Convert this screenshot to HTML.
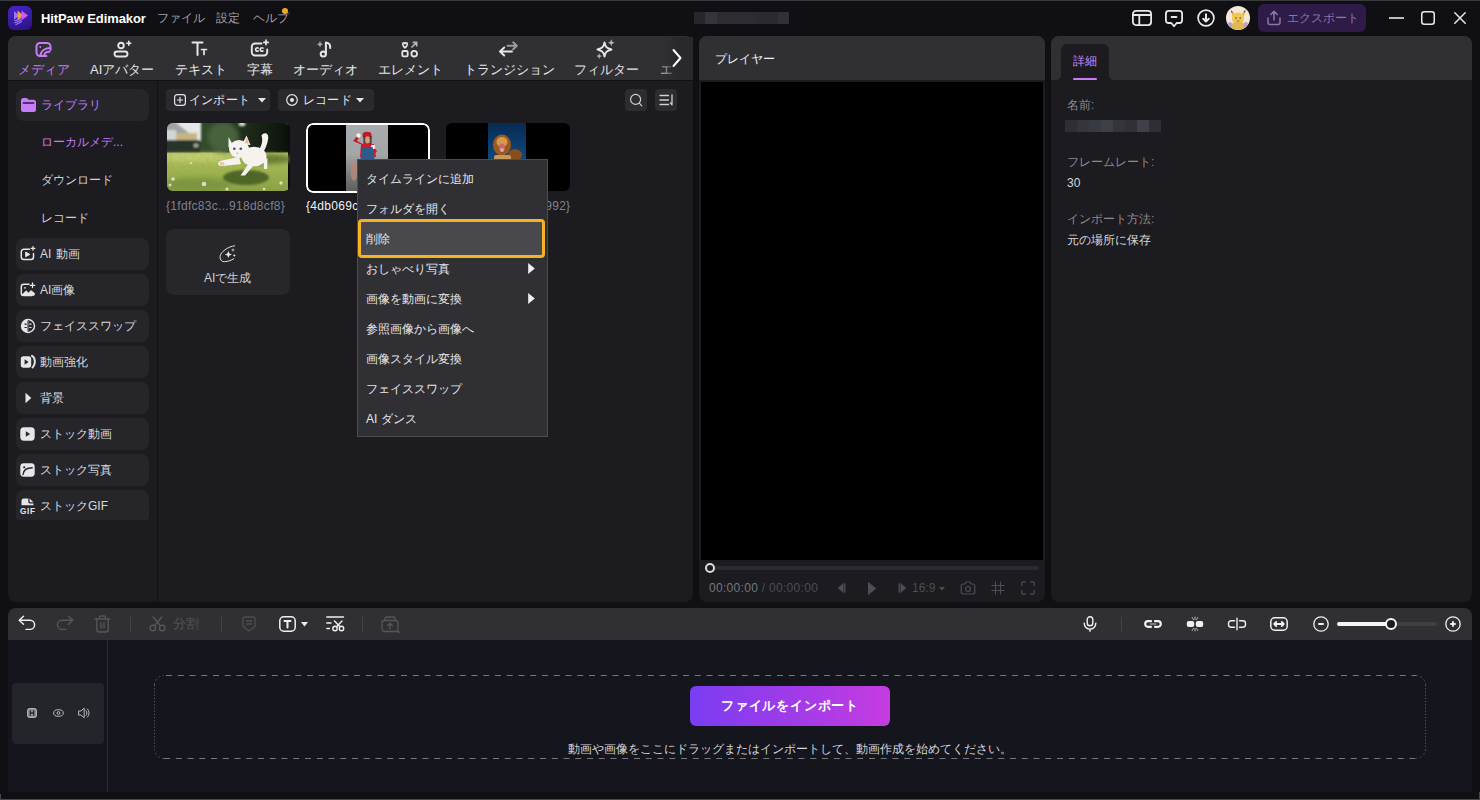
<!DOCTYPE html>
<html lang="ja"><head><meta charset="utf-8"><title>HitPaw Edimakor</title>
<style>
*{box-sizing:border-box;margin:0;padding:0}
html,body{width:1480px;height:800px;overflow:hidden;background:#0f0f14}
body{font-family:"Liberation Sans",sans-serif;font-size:13px;color:#d4d4d8;position:relative}
.a{position:absolute}
.t{position:absolute;white-space:nowrap;line-height:1}
svg{position:absolute;overflow:visible}
.panel{position:absolute;background:#1b1b20;border-radius:8px;overflow:hidden}
.hdr{position:absolute;left:0;top:0;right:0;height:44px;background:#303033}
.sb{position:absolute;left:16px;width:133px;height:32px;border-radius:8px;background:#25252a}
.sb .t{left:24px;top:10px;font-size:12px;color:#dadade}
.tab{position:absolute;top:31px;font-size:13px;color:#e4e4e8;line-height:1;white-space:nowrap}
.mi{position:absolute;left:8px;margin-top:1px;font-size:12px;color:#e6e6ea;line-height:1;white-space:nowrap}
</style></head><body>

<!-- ===== title bar ===== -->
<div class="a" style="left:0;top:0;width:1480px;height:1px;background:#3a3a3e"></div>
<div class="a" id="logo" style="left:8px;top:6px;width:24px;height:24px;border-radius:6px;background:linear-gradient(160deg,#4a25c8,#2a1280)"></div>
<div class="t" style="left:41px;top:12px;font-size:13px;font-weight:bold;letter-spacing:-.1px;color:#fff">HitPaw Edimakor</div>
<div class="t" style="left:157px;top:12px;font-size:12px;color:#a2a2aa">ファイル</div>
<div class="t" style="left:216px;top:12px;font-size:12px;color:#a2a2aa">設定</div>
<div class="t" style="left:253px;top:12px;font-size:12px;color:#a2a2aa">ヘルプ</div>
<div class="a" style="left:282px;top:8px;width:6px;height:6px;border-radius:50%;background:#f5a623"></div>
<div class="a" id="blur1" style="left:694px;top:12px;width:95px;height:12px;background:linear-gradient(90deg,#26262b 0 12%,#34343a 12% 24%,#2c2c31 24% 50%,#2a2d33 50% 64%,#2a2a2f 64% 88%,#303036 88%)"></div>


<!-- logo glyph -->
<svg style="left:8px;top:6px" width="24" height="24" viewBox="0 0 24 24">
 <path d="M6 5L11 9.500L6 14Z" fill="#8f7bff"/>
 <path d="M9.500 4.500L15.500 9.500L9.500 14.500Z" fill="#ff9b3d"/>
 <path d="M13.500 4.500L20 9.500L13.500 14.500Z" fill="#c95cf5"/>
 <path d="M13 12.500L6.500 15M13.500 14L6.500 17M14 15.500L7.500 18.800" stroke="#9a7bff" stroke-width="1.100" fill="none"/>
</svg>
<!-- right title icons -->
<svg style="left:1132px;top:10px" width="20" height="16" viewBox="0 0 20 16" fill="none" stroke="#e8e8ec" stroke-width="1.800">
 <rect x=".9" y=".9" width="18.200" height="14.200" rx="3"/><path d="M.9 5H19.100M7.300 5V15.100"/></svg>
<svg style="left:1165px;top:10px" width="18" height="18" viewBox="0 0 18 18" fill="none" stroke="#e8e8ec" stroke-width="1.800" stroke-linejoin="round">
 <path d="M3.700 .9H14.300A2.800 2.800 0 0 1 17.100 3.700V10.200A2.800 2.800 0 0 1 14.300 13H11.700L9 16.300L6.300 13H3.700A2.800 2.800 0 0 1 .9 10.200V3.700A2.800 2.800 0 0 1 3.700 .9Z"/><path d="M6.600 7H11.400" stroke-linecap="round" stroke-width="2"/></svg>
<svg style="left:1197px;top:9px" width="18" height="18" viewBox="0 0 18 18" fill="none" stroke="#e8e8ec" stroke-width="1.700" stroke-linecap="round" stroke-linejoin="round">
 <circle cx="9" cy="9" r="7.900"/><path d="M9 5.300V12M6.200 9.700L9 12.500L11.800 9.700" stroke-width="2"/></svg>
<svg style="left:1226px;top:6px" width="24" height="24" viewBox="0 0 24 24"><defs><clipPath id="av"><circle cx="12" cy="12" r="12"/></clipPath><filter id="avb"><feGaussianBlur stdDeviation=".6"/></filter></defs>
 <g clip-path="url(#av)"><rect width="24" height="24" fill="#f4e8dc"/>
 <g filter="url(#avb)">
  <path d="M5 4L10 9L6.500 11Z" fill="#e8c04a"/><path d="M19.500 3.500L14.500 9L18 11Z" fill="#e8c04a"/>
  <path d="M5 4L7 6.500L5.500 7Z" fill="#5a4630"/><path d="M19.500 3.500L17.500 6L19 6.800Z" fill="#5a4630"/>
  <ellipse cx="12" cy="13" rx="6" ry="6.500" fill="#efc94e"/>
  <ellipse cx="12" cy="20" rx="7.500" ry="4" fill="#e2b652"/>
  <path d="M2 17C4 15 6 16 6.500 19L4 23Z" fill="#b7a0cc"/><path d="M22 17C20 15 18 16 17.500 19L20 23Z" fill="#b7a0cc"/>
  <circle cx="10" cy="12" r=".8" fill="#5a4630"/><circle cx="14.200" cy="12" r=".8" fill="#5a4630"/>
  <ellipse cx="12" cy="15" rx="1.500" ry="1" fill="#c88a5a"/>
 </g></g></svg>
<div class="a" style="left:1258px;top:4px;width:108px;height:28px;border-radius:6px;background:#2e1b48"></div>
<svg style="left:1267px;top:10px" width="14" height="16" viewBox="0 0 14 16" fill="none" stroke="#8a78a6" stroke-width="1.5" stroke-linecap="round" stroke-linejoin="round">
 <path d="M7 10V1.5M3.8 4.5L7 1.2L10.2 4.5M1 8V12.5A2 2 0 0 0 3 14.5H11A2 2 0 0 0 13 12.5V8"/></svg>
<div class="t" style="left:1287px;top:12px;font-size:12px;color:#8a78a6">エクスポート</div>
<svg style="left:1389px;top:17px" width="15" height="2" viewBox="0 0 15 2"><path d="M0 1H15" stroke="#e8e8ec" stroke-width="1.6"/></svg>
<svg style="left:1421px;top:11px" width="14" height="14" viewBox="0 0 14 14" fill="none" stroke="#e8e8ec" stroke-width="1.5"><rect x=".75" y=".75" width="12.5" height="12.5" rx="2.5"/></svg>
<svg style="left:1454px;top:12px" width="12" height="12" viewBox="0 0 12 12" fill="none" stroke="#e8e8ec" stroke-width="1.5" stroke-linecap="round"><path d="M.8 .8L11.2 11.2M11.2 .8L.8 11.2"/></svg>

<!-- ===== left panel ===== -->
<div class="panel" id="left" style="left:8px;top:36px;width:685px;height:566px">
  <div class="hdr"></div>
</div>


<!-- ===== tabs ===== -->
<div class="t" style="left:18px;top:63px;font-size:13px;color:#c77dfa">メディア</div>
<div class="t" style="left:90px;top:63px;font-size:13px;color:#e6e6ea">AIアバター</div>
<div class="t" style="left:175px;top:63px;font-size:13px;color:#e6e6ea">テキスト</div>
<div class="t" style="left:247px;top:63px;font-size:13px;color:#e6e6ea">字幕</div>
<div class="t" style="left:293px;top:63px;font-size:13px;color:#e6e6ea">オーディオ</div>
<div class="t" style="left:378px;top:63px;font-size:13px;color:#e6e6ea">エレメント</div>
<div class="t" style="left:464px;top:63px;font-size:13px;color:#e6e6ea">トランジション</div>
<div class="t" style="left:574px;top:63px;font-size:13px;color:#e6e6ea">フィルター</div>
<div class="t" style="left:660px;top:63px;font-size:13px;color:#b4b4b8">エ</div>
<div class="a" style="left:664px;top:37px;width:29px;height:43px;background:linear-gradient(90deg,rgba(44,44,48,0),#29292d 50%)"></div>
<!-- media icon -->
<svg style="left:35px;top:41px" width="17" height="17" viewBox="0 0 17 17" fill="none" stroke="#c77dfa" stroke-width="2" stroke-linecap="round" stroke-linejoin="round">
 <path d="M11.5 15H5A3.5 3.5 0 0 1 1.5 11.5V5.5A3.5 3.5 0 0 1 5 2H12A3.5 3.5 0 0 1 15.5 5.5V9"/>
 <circle cx="5.3" cy="6" r=".9" fill="#c77dfa" stroke="none"/>
 <path d="M5.5 15C5.5 10.5 9 7.2 15 7M9 15C9.3 12.3 11.5 10.8 14.5 10.8"/>
</svg>
<!-- avatar icon -->
<svg style="left:113px;top:40px" width="20" height="18" viewBox="0 0 20 18" fill="none" stroke="#e6e6ea" stroke-width="1.9" stroke-linecap="round" stroke-linejoin="round">
 <circle cx="8" cy="5.5" r="2.8"/><rect x="1.5" y="11.5" width="13" height="5" rx="2.5"/>
 <path d="M15.8 1.2V5.2M13.8 3.2H17.8" stroke-width="1.6"/>
</svg>
<!-- text icon -->
<svg style="left:191px;top:41px" width="18" height="16" viewBox="0 0 18 16" fill="none" stroke="#e6e6ea" stroke-width="2" stroke-linecap="round">
 <path d="M1.5 1.5H11.5M6.5 1.5V14"/><path d="M10.5 8.5H15.5M13 8.5V13.5" stroke-width="1.7"/>
</svg>
<!-- cc icon -->
<svg style="left:250px;top:39px" width="20" height="19" viewBox="0 0 20 19" fill="none" stroke="#e6e6ea" stroke-width="1.9" stroke-linecap="round" stroke-linejoin="round">
 <path d="M11.5 4.5H5A3.2 3.2 0 0 0 1.8 7.7V13.3A3.2 3.2 0 0 0 5 16.5H14A3.2 3.2 0 0 0 17.2 13.3V10.5"/>
 <path d="M8.3 9.1A1.7 1.7 0 1 0 8.3 11.9M13 9.1A1.7 1.7 0 1 0 13 11.9" stroke-width="1.6"/>
 <path d="M16 1.2V5.6M13.8 3.4H18.2" stroke-width="1.7"/>
</svg>
<!-- audio icon -->
<svg style="left:316px;top:40px" width="18" height="19" viewBox="0 0 18 19" fill="none" stroke="#e6e6ea" stroke-width="2" stroke-linecap="round" stroke-linejoin="round">
 <circle cx="7.3" cy="14" r="2.6"/><path d="M9.9 14V2.5C12.5 2.8 14.5 4.6 14.2 8"/>
 <path d="M4 1L5 3.3L7.2 4.3L5 5.3L4 7.6L3 5.3L.8 4.3L3 3.3Z" fill="#a8a8ac" stroke="none"/>
</svg>
<!-- element icon -->
<svg style="left:401px;top:41px" width="18" height="17" viewBox="0 0 18 17" fill="none" stroke="#e6e6ea" stroke-width="1.8" stroke-linecap="round" stroke-linejoin="round">
 <rect x="1.3" y="10" width="5.4" height="5.4" rx="1.2"/><circle cx="13.2" cy="12.7" r="2.8"/>
 <path d="M4 6.8C1.2 4.6 1.2 1.8 2.8 1.8C3.6 1.8 4 2.6 4 2.6C4 2.6 4.4 1.8 5.2 1.8C6.8 1.8 6.8 4.6 4 6.8Z" stroke-width="1.6"/>
 <path d="M11 6L15.5 1.5M12.3 1.3H15.7V4.7" stroke="#b4b4b8" stroke-width="1.7"/>
</svg>
<!-- transition icon -->
<svg style="left:498px;top:41px" width="20" height="17" viewBox="0 0 20 17" fill="none" stroke-width="1.900" stroke-linecap="round" stroke-linejoin="round">
 <path d="M9.500 4.800H18.500M15.200 1.300L18.800 4.800L15.200 8.300" stroke="#9c9ca0"/>
 <path d="M14 10.500H2.500M6.200 6.500L2 10.500L6.200 14.500" stroke="#e6e6ea"/>
</svg>
<!-- filter icon -->
<svg style="left:596px;top:39px" width="20" height="21" viewBox="0 0 20 21" fill="none" stroke="#e6e6ea" stroke-width="1.900" stroke-linejoin="round">
 <path d="M8.500 3.500C9.400 8 10.500 9.100 15.500 10.500C10.500 11.900 9.400 13 8.500 17.500C7.600 13 6.500 11.900 1.500 10.500C6.500 9.100 7.600 8 8.500 3.500Z"/>
 <path d="M15.300 .3L16.300 2.700L18.700 3.700L16.300 4.700L15.300 7.100L14.300 4.700L11.900 3.700L14.300 2.700Z" fill="#b4b4b8" stroke="none"/>
 <path d="M3.200 14.300L4 16.300L6 17.100L4 17.900L3.200 19.900L2.400 17.900L.4 17.100L2.400 16.300Z" fill="#b4b4b8" stroke="none"/>
</svg>
<!-- chevron -->
<svg style="left:672px;top:48px" width="10" height="20" viewBox="0 0 10 20" fill="none" stroke="#fff" stroke-width="2" stroke-linecap="round" stroke-linejoin="round"><path d="M1.5 2L8.5 10L1.5 18"/></svg>
<div class="a" style="left:8px;top:80px;width:685px;height:1px;background:#111115"></div>


<!-- ===== sidebar ===== -->
<div class="a" style="left:157px;top:81px;width:1px;height:521px;background:#101014"></div>
<div class="sb" style="top:89px"><div class="t" style="left:25px;color:#c77dfa">ライブラリ</div></div>
<svg style="left:21px;top:98px" width="15" height="14" viewBox="0 0 15 14"><path d="M2.5 0H5.3C6 0 6.5 .3 6.9 .9L7.4 1.7H12.5A2.5 2.5 0 0 1 15 4.2V11.5A2.5 2.5 0 0 1 12.5 14H2.5A2.5 2.5 0 0 1 0 11.5V2.5A2.5 2.5 0 0 1 2.5 0Z" fill="#c77dfa"/><path d="M2.3 5H12.7" stroke="#2a1a38" stroke-width="1.3" stroke-linecap="round"/></svg>
<div class="t" style="left:41px;top:136px;font-size:12px;color:#c77dfa">ローカルメデ...</div>
<div class="t" style="left:41px;top:174px;font-size:12px;color:#d0d0d4">ダウンロード</div>
<div class="t" style="left:41px;top:212px;font-size:12px;color:#d0d0d4">レコード</div>
<div class="sb" style="top:238px"><div class="t" style="word-spacing:1.500px">AI 動画</div></div>
<div class="sb" style="top:274px"><div class="t">AI画像</div></div>
<div class="sb" style="top:310px"><div class="t">フェイススワップ</div></div>
<div class="sb" style="top:346px"><div class="t">動画強化</div></div>
<div class="sb" style="top:382px"><div class="t">背景</div></div>
<div class="sb" style="top:418px"><div class="t">ストック動画</div></div>
<div class="sb" style="top:454px"><div class="t">ストック写真</div></div>
<div class="sb" style="top:490px;height:30px;border-radius:8px 8px 3px 3px"><div class="t">ストックGIF</div></div>
<!-- sidebar icons -->
<svg style="left:20px;top:246px" width="16" height="15" viewBox="0 0 16 15" fill="none" stroke="#e6e6ea" stroke-width="1.5" stroke-linecap="round" stroke-linejoin="round">
 <path d="M9.5 3.2H3.8A2.5 2.5 0 0 0 1.3 5.7V11A2.5 2.5 0 0 0 3.8 13.5H11A2.5 2.5 0 0 0 13.5 11V7.5"/><path d="M6 6.3L9.8 8.4L6 10.5Z" fill="#e6e6ea" stroke-width="1"/>
 <path d="M13 .6V4.2M11.2 2.4H14.8" stroke-width="1.3"/></svg>
<svg style="left:20px;top:282px" width="16" height="15" viewBox="0 0 16 15" fill="none" stroke="#e6e6ea" stroke-width="1.5" stroke-linecap="round" stroke-linejoin="round">
 <path d="M9 2.2H3.8A2.5 2.5 0 0 0 1.3 4.7V11A2.5 2.5 0 0 0 3.8 13.5H11.5"/><circle cx="5" cy="5.8" r=".9" fill="#e6e6ea" stroke="none"/>
 <path d="M2 13L6 8.8L8.5 11L11 8.6L14.5 11.3V12.2A1.3 1.3 0 0 1 13.2 13.5H3Z" fill="#e6e6ea" stroke-width=".8"/>
 <path d="M12.5 1V5.6M10.2 3.3H14.8" stroke-width="1.3"/></svg>
<svg style="left:20px;top:318px" width="16" height="16" viewBox="0 0 16 16">
 <path d="M8 .8A7.2 7.2 0 1 0 8 15.2Z" fill="#e6e6ea"/><path d="M8 1.5A6.5 6.5 0 0 1 8 14.5" fill="none" stroke="#e6e6ea" stroke-width="1.4"/>
 <path d="M4.5 6.2H6.8M4.5 9.5H6.8" stroke="#25252a" stroke-width="1.2"/><path d="M9.3 6.2H11.5M9.3 9.5H11.5M8 3V13" stroke="#e6e6ea" stroke-width="1.2"/><path d="M8 2.5V13.5" stroke="#25252a" stroke-width="1"/></svg>
<svg style="left:20px;top:354px" width="16" height="15" viewBox="0 0 16 15">
 <rect x=".8" y="2.300" width="10.400" height="11.400" rx="2.600" fill="#e6e6ea"/><path d="M4.600 5.300L8.600 8L4.600 10.700Z" fill="#25252a"/>
 <path d="M12 1.800C14.300 3.200 15.200 6.300 14.600 9.600C14.300 11.300 13.600 12.500 12.500 13.400" fill="none" stroke="#e6e6ea" stroke-width="2" stroke-linecap="round"/></svg>
<svg style="left:25px;top:392px" width="7" height="12" viewBox="0 0 7 12"><path d="M.5 .8L6.3 6L.5 11.2Z" fill="#e6e6ea"/></svg>
<svg style="left:20px;top:427px" width="15" height="14" viewBox="0 0 15 14"><rect x=".3" y=".3" width="14.4" height="13.4" rx="3.6" fill="#e6e6ea"/><path d="M5.8 4.2L10.2 7L5.8 9.8Z" fill="#25252a"/></svg>
<svg style="left:20px;top:463px" width="15" height="14" viewBox="0 0 15 14"><rect x=".3" y=".3" width="14.4" height="13.4" rx="3.4" fill="#e6e6ea"/><circle cx="4.2" cy="4.3" r="1.1" fill="#25252a"/><path d="M3 11.5C3.5 7.5 7 4.8 12.2 4.8" fill="none" stroke="#25252a" stroke-width="1.4" stroke-linecap="round"/></svg>
<svg style="left:20px;top:498px" width="16" height="17" viewBox="0 0 16 17"><path d="M1.5 7.2V2.8A2.3 2.3 0 0 1 3.8 .5H8.3V3.8A1.6 1.6 0 0 0 9.9 5.4H13.5V7.2Z" fill="#e6e6ea"/><path d="M9.6 .6L13.4 4.2H10.4A.8 .8 0 0 1 9.6 3.4Z" fill="#e6e6ea"/>
 <text x="0" y="16" font-family="Liberation Sans, sans-serif" font-weight="bold" font-size="8.2" fill="#e6e6ea" textLength="15">GIF</text></svg>

<!-- ===== media toolbar ===== -->
<div class="a" style="left:166px;top:89px;width:104px;height:22px;border-radius:4px;background:#29292e"></div>
<svg style="left:174px;top:94px" width="12" height="12" viewBox="0 0 12 12" fill="none" stroke="#e6e6ea" stroke-width="1.2" stroke-linecap="round"><rect x=".6" y=".6" width="10.8" height="10.8" rx="2.6"/><path d="M6 3.4V8.6M3.4 6H8.6"/></svg>
<div class="t" style="left:189px;top:94px;font-size:12px;color:#e6e6ea;letter-spacing:.2px">インポート</div>
<svg style="left:258px;top:98px" width="8" height="5" viewBox="0 0 8 5"><path d="M0 0H8L4 4.6Z" fill="#e6e6ea"/></svg>
<div class="a" style="left:278px;top:89px;width:96px;height:22px;border-radius:4px;background:#29292e"></div>
<svg style="left:286px;top:94px" width="12" height="12" viewBox="0 0 12 12"><circle cx="6" cy="6" r="5.3" fill="none" stroke="#e6e6ea" stroke-width="1.2"/><circle cx="6" cy="6" r="2" fill="#e6e6ea"/></svg>
<div class="t" style="left:303px;top:94px;font-size:12px;color:#e6e6ea;letter-spacing:.2px">レコード</div>
<svg style="left:356px;top:98px" width="8" height="5" viewBox="0 0 8 5"><path d="M0 0H8L4 4.6Z" fill="#e6e6ea"/></svg>
<div class="a" style="left:625px;top:89px;width:22px;height:22px;border-radius:4px;background:#2c2c31"></div>
<svg style="left:629px;top:93px" width="14" height="14" viewBox="0 0 14 14" fill="none" stroke="#d0d0d4" stroke-width="1.2" stroke-linecap="round"><circle cx="6.6" cy="6.4" r="5"/><path d="M10.5 10.3L12.8 12.8"/></svg>
<div class="a" style="left:655px;top:89px;width:22px;height:22px;border-radius:4px;background:#2c2c31"></div>
<svg style="left:659px;top:94px" width="15" height="12" viewBox="0 0 15 12" fill="none" stroke="#d0d0d4" stroke-width="1.3" stroke-linecap="round" stroke-linejoin="round"><path d="M1 1.5H9.5M1 6H9.5M1 10.5H9.5M13 1V10.5M11.4 9L13 10.8"/></svg>


<!-- ===== media grid ===== -->
<div class="a" id="th1" style="left:167px;top:123px;width:123px;height:68px;border-radius:6px;overflow:hidden;background:#0b0e0a">
<svg style="left:0;top:0" width="121" height="68" viewBox="0 0 121 68">
 <defs>
  <linearGradient id="gr" x1="0" y1="0" x2="0" y2="1"><stop offset="0" stop-color="#8fa04a"/><stop offset=".42" stop-color="#bdc969"/><stop offset=".6" stop-color="#a9ba55"/><stop offset="1" stop-color="#8ba145"/></linearGradient>
  <linearGradient id="tr" x1="0" y1="0" x2="1" y2="0"><stop offset="0" stop-color="#3a4d2c"/><stop offset=".3" stop-color="#324a29"/><stop offset=".62" stop-color="#1f2e1a"/><stop offset="1" stop-color="#0c120b"/></linearGradient>
  <filter id="b1"><feGaussianBlur stdDeviation="1.200"/></filter><filter id="b2"><feGaussianBlur stdDeviation=".55"/></filter><filter id="b4"><feGaussianBlur stdDeviation="2.500"/></filter>
  <filter id="nz" x="0" y="0" width="1" height="1"><feTurbulence type="fractalNoise" baseFrequency=".35" numOctaves="2" seed="4"/><feColorMatrix values="0 0 0 0 .25  0 0 0 0 .35  0 0 0 0 .08  0 0 0 .9 -.32"/></filter>
 </defs>
 <rect width="121" height="68" fill="url(#gr)"/>
 <rect x="0" y="0" width="121" height="29.500" fill="url(#tr)"/>
 <g filter="url(#b4)">
  <ellipse cx="100" cy="36" rx="26" ry="5" fill="#62782e"/>
  <ellipse cx="28" cy="34" rx="34" ry="3.500" fill="#c6d172"/>
  <ellipse cx="30" cy="62" rx="34" ry="7" fill="#7c9540"/>
  <ellipse cx="56" cy="14" rx="16" ry="16" fill="#47623c"/>
 </g>
 <rect x="0" y="28" width="121" height="40" filter="url(#nz)" opacity=".55"/>
 <g filter="url(#b1)">
  <rect x="-2" y="-2" width="36" height="20" fill="#e4e8e6"/>
  <path d="M-2 -1H8L22 10V18H-2Z" fill="#9fa3a6"/>
  <rect x="-2" y="7" width="11" height="11" fill="#d3d6d4"/>
  <rect x="9" y="10" width="21" height="8" fill="#c6b583"/>
  <rect x="-2" y="17" width="35" height="11.500" fill="#27362a"/>
  <ellipse cx="75" cy="1" rx="3.500" ry="2.200" fill="#d8e4d8"/>
  <ellipse cx="29" cy="22.500" rx="2.500" ry="2" fill="#a8ae98"/>
  <ellipse cx="79" cy="54.500" rx="23" ry="7.500" fill="#4f6626"/>
 </g>
 <g filter="url(#b2)" fill="#f6f3ee">
  <path d="M94.500 12.500C97 8.500 102 10 101.200 15.500C100.500 21 98.500 25.500 96 29.500L92.500 26C95 21.500 96 17.500 94.500 12.500Z"/>
  <ellipse cx="87" cy="33.500" rx="12.500" ry="9.800"/>
  <ellipse cx="72" cy="26" rx="10" ry="9"/>
  <path d="M61.500 14L66.500 23L61.500 24.500Z M79.500 12.500L83.500 22L75 21.500Z"/>
  <path d="M72 34L55 37.500C49.500 38.500 50 44 56 43L74 41Z"/>
  <path d="M82 40L73.500 52.500H78L87 42Z M96.500 37L97 46H100.200L100.500 35Z"/>
 </g>
 <path d="M79.500 14.500L82 20.500L78 20.500Z" fill="#e9b59b"/>
 <ellipse cx="67.300" cy="25.800" rx="1.400" ry="1.300" fill="#4a5272"/><ellipse cx="73.800" cy="25.800" rx="1.400" ry="1.300" fill="#4a5272"/>
 <ellipse cx="70.300" cy="30.300" rx="1" ry=".8" fill="#e0a49c"/>
 <ellipse cx="55" cy="40.800" rx="2.600" ry="1.900" fill="#ecc4b4"/>
 <g fill="#eef0de" opacity=".8" filter="url(#b2)"><circle cx="6" cy="56" r="1.800"/><circle cx="37" cy="61" r="2.300"/><circle cx="114" cy="60" r="1.700"/><circle cx="60" cy="66" r="1.600"/><circle cx="24" cy="40" r="1"/><circle cx="3" cy="62" r="1.500"/><circle cx="97" cy="66" r="1.300"/></g>
</svg></div>
<div class="t" style="left:166px;top:200px;font-size:12px;letter-spacing:.3px;color:#7e8290">{1fdfc83c...918d8cf8}</div>

<div class="a" id="th2" style="left:306px;top:123px;width:124px;height:70px;border-radius:7px;background:#000;overflow:hidden">
 <div class="a" style="left:40px;top:0;width:42px;height:70px;background:linear-gradient(180deg,#a9acae 0,#a3a6a8 45%,#7a7a7a 75%,#5a5a5a 100%)"></div>
 <svg style="left:40px;top:2px" width="42" height="66" viewBox="0 0 42 66">
  <ellipse cx="21" cy="10" rx="4.500" ry="3.200" fill="#c01828"/><rect x="17" y="11" width="9" height="2.200" rx="1" fill="#a01020"/>
  <ellipse cx="21.500" cy="15" rx="3.200" ry="3.800" fill="#c89880"/><path d="M17.500 13C17 18 17.500 21 18.500 22H24.500C25.500 21 26 17 25.500 13Z" fill="#3a2418" opacity=".75"/>
  <ellipse cx="21.500" cy="15.500" rx="2.400" ry="3" fill="#d0a088"/>
  <path d="M14 19L7 16L11 11L13 13L11 16L17 19Z" fill="#c81c2c"/><circle cx="12.500" cy="10.500" r="2.200" fill="#f0f0f0"/>
  <path d="M15 19H28L30 32H14Z" fill="#c81c2c"/><path d="M26 20L31 26L28 30L25 25Z" fill="#c81c2c"/><circle cx="27" cy="22" r="2.300" fill="#f0f0f0"/>
  <path d="M16.500 22H26.500L29 36H14Z" fill="#2c5a8c"/>
  <ellipse cx="8" cy="46" rx="3.500" ry="10" fill="#b88a78" opacity=".8"/>
 </svg>
 <div class="a" style="left:0;top:0;width:124px;height:70px;border:2px solid #fff;border-radius:7px"></div>
</div>
<div class="t" style="left:306px;top:200px;font-size:12px;letter-spacing:.3px;color:#f0f0f4">{4db069c8...a3f91d04}</div>

<div class="a" id="th3" style="left:446px;top:123px;width:124px;height:68px;border-radius:6px;background:#000;overflow:hidden">
 <div class="a" style="left:42px;top:0;width:38px;height:68px;background:linear-gradient(180deg,#082a52 0,#0b3c6c 30%,#0e4a80 55%,#0a2038 70%,#1a1208 100%)"></div>
 <svg style="left:42px;top:0" width="38" height="68" viewBox="0 0 38 68"><defs><filter id="b3"><feGaussianBlur stdDeviation=".5"/></filter></defs>
  <g filter="url(#b3)"><ellipse cx="14" cy="22" rx="9" ry="10.500" fill="#9a5a1c"/><ellipse cx="27" cy="32" rx="7" ry="6" fill="#8a4e1a"/>
  <ellipse cx="14" cy="19" rx="5.500" ry="5" fill="#d89848"/><ellipse cx="14" cy="24.500" rx="3" ry="4" fill="#c86868"/><ellipse cx="14" cy="27" rx="2" ry="2" fill="#e8a0a0"/>
  <rect x="6" y="32" width="17" height="6" rx="2" fill="#c89858"/></g>
 </svg>
</div>
<div class="t" style="left:440px;top:200px;width:128px;text-align:right;font-size:12px;letter-spacing:.3px;color:#7e8290">{a8c01e57...6b2dd992}</div>

<div class="a" style="left:166px;top:229px;width:124px;height:66px;border-radius:8px;background:#26262b"></div>
<svg style="left:219px;top:244px" width="19" height="19" viewBox="0 0 19 19" fill="none" stroke="#e0e0e4" stroke-width="1" stroke-linecap="round">
 <path d="M15.7 1.75C9 2.5 1.5 8 1 12.6C.8 16 3 18 5.6 17.7C9 17.4 12.500 16.500 14.800 14.700"/>
 <path d="M9.40 6.90L10.41 9.49L13.00 10.50L10.41 11.51L9.40 14.10L8.39 11.51L5.80 10.50L8.39 9.49Z" fill="#e8e8ec" stroke="none"/>
 <path d="M14.00 4.00L14.56 5.44L16.00 6.00L14.56 6.56L14.00 8.00L13.44 6.56L12.00 6.00L13.44 5.44Z" fill="#c8c8cc" stroke="none"/>
 <path d="M15.30 9.70L15.78 10.92L17.00 11.40L15.78 11.88L15.30 13.10L14.82 11.88L13.60 11.40L14.82 10.92Z" fill="#d8d8dc" stroke="none"/>
</svg>
<div class="t" style="left:204px;top:272px;font-size:12px;color:#d0d0d4">AIで生成</div>

<!-- ===== context menu ===== -->
<div class="a" id="menu" style="left:357px;top:159px;width:191px;height:278px;background:#2f2f34;border:1px solid #4c4c51">
 <div class="a" style="left:0px;top:59px;width:187px;height:39px;border:3px solid #f5b324;border-radius:4px;background:#48484d"></div>
 <div class="mi" style="top:12px">タイムラインに追加</div>
 <div class="mi" style="top:42px">フォルダを開く</div>
 <div class="mi" style="top:72px">削除</div>
 <div class="mi" style="top:102px">おしゃべり写真</div>
 <div class="mi" style="top:132px">画像を動画に変換</div>
 <div class="mi" style="top:162px">参照画像から画像へ</div>
 <div class="mi" style="top:192px">画像スタイル変換</div>
 <div class="mi" style="top:222px">フェイススワップ</div>
 <div class="mi" style="top:252px">AI ダンス</div>
 <svg style="left:170px;top:103px" width="7" height="11" viewBox="0 0 6 10"><path d="M0 0L6 5L0 10Z" fill="#f0f0f4"/></svg>
 <svg style="left:170px;top:133px" width="7" height="11" viewBox="0 0 6 10"><path d="M0 0L6 5L0 10Z" fill="#f0f0f4"/></svg>
</div>

<!-- ===== player panel ===== -->
<div class="panel" id="player" style="left:699px;top:36px;width:346px;height:566px">
  <div class="hdr"></div>
  <div class="a" style="left:2px;top:46px;width:342px;height:478px;background:#000"></div>
</div>

<!-- ===== details panel ===== -->
<div class="panel" id="details" style="left:1051px;top:36px;width:421px;height:566px">
  <div class="hdr"></div>
</div>


<!-- ===== player contents ===== -->
<div class="t" style="left:715px;top:53px;font-size:12px;color:#f0f0f4">プレイヤー</div>
<div class="a" style="left:706px;top:566px;width:333px;height:4px;border-radius:2px;background:#2b2b31"></div>
<div class="a" style="left:705px;top:563px;width:10px;height:10px;border-radius:50%;border:2.500px solid #dcdcdc;background:#1b1b20"></div>
<div class="t" style="left:709px;top:582px;font-size:12px;letter-spacing:.3px;color:#77777e">00:00:00 <span style="color:#4d4d53">/ 00:00:00</span></div>
<svg style="left:837px;top:582px" width="10" height="12" viewBox="0 0 10 12"><path d="M6.500 1L.8 6L6.500 11Z" fill="#4d4d53"/><path d="M7.800 1.200V10.800" stroke="#4d4d53" stroke-width="1.300"/></svg>
<svg style="left:867px;top:581px" width="10" height="15" viewBox="0 0 10 15"><path d="M1 .8L9.300 7.500L1 14.200Z" fill="#4d4d53"/></svg>
<svg style="left:897px;top:582px" width="10" height="12" viewBox="0 0 10 12"><path d="M3.500 1L9.200 6L3.500 11Z" fill="#4d4d53"/><path d="M2.200 1.200V10.800" stroke="#4d4d53" stroke-width="1.300"/></svg>
<div class="t" style="left:912px;top:582px;font-size:12px;color:#4d4d53">16:9</div>
<svg style="left:939px;top:587px" width="6" height="4" viewBox="0 0 6 4"><path d="M0 0H6L3 3.600Z" fill="#4d4d53"/></svg>
<svg style="left:960px;top:581px" width="16" height="14" viewBox="0 0 16 14" fill="none" stroke="#4d4d53" stroke-width="1.200" stroke-linejoin="round"><path d="M5 3L6 1H10L11 3H12.800A2 2 0 0 1 14.800 5V11A2 2 0 0 1 12.800 13H3.200A2 2 0 0 1 1.200 11V5A2 2 0 0 1 3.200 3Z"/><circle cx="8" cy="8" r="2.500"/></svg>
<svg style="left:991px;top:581px" width="14" height="14" viewBox="0 0 14 14" fill="none" stroke="#4d4d53" stroke-width="1.100"><path d="M4.500 .5V13.500M9.500 .5V13.500M.5 4.500H13.500M.5 9.500H13.500"/></svg>
<svg style="left:1021px;top:581px" width="14" height="14" viewBox="0 0 14 14" fill="none" stroke="#4d4d53" stroke-width="1.200" stroke-linecap="round" stroke-linejoin="round"><path d="M.8 4.500V2.500A1.700 1.700 0 0 1 2.500 .8H4.500M9.500 .8H11.500A1.700 1.700 0 0 1 13.200 2.500V4.500M13.200 9.500V11.500A1.700 1.700 0 0 1 11.500 13.200H9.500M4.500 13.200H2.500A1.700 1.700 0 0 1 .8 11.500V9.500"/></svg>

<!-- ===== details contents ===== -->
<svg style="left:1055px;top:44px" width="60" height="36" viewBox="0 0 60 36"><path d="M0 36C4 36 6 34 6 30V6A6 6 0 0 1 12 0H48A6 6 0 0 1 54 6V30C54 34 56 36 60 36Z" fill="#1b1b20"/></svg>
<div class="t" style="left:1073px;top:55px;font-size:12px;color:#c98af8">詳細</div>
<div class="a" style="left:1073px;top:78px;width:24px;height:2px;border-radius:1px;background:#c77dfa"></div>
<div class="t" style="left:1067px;top:99px;font-size:12px;color:#8a8a91">名前:</div>
<div class="a" style="left:1065px;top:120px;width:96px;height:12px;background:linear-gradient(90deg,#2e2f35 0 12%,#35363c 12% 25%,#383a41 25% 37%,#3e4048 37% 50%,#34353b 50% 62%,#303136 62% 75%,#404148 75% 87%,#2e2f34 87%)"></div>
<div class="t" style="left:1067px;top:156px;font-size:12px;color:#8a8a91">フレームレート:</div>
<div class="t" style="left:1067px;top:177px;font-size:12px;color:#d8d8dc">30</div>
<div class="t" style="left:1067px;top:213px;font-size:12px;color:#8a8a91">インポート方法:</div>
<div class="t" style="left:1067px;top:234px;font-size:12px;color:#d8d8dc">元の場所に保存</div>

<!-- ===== timeline ===== -->
<div class="a" id="tbar" style="left:8px;top:608px;width:1464px;height:32px;background:#303033;border-radius:8px 8px 0 0"></div>
<div class="a" id="tbody" style="left:8px;top:640px;width:1464px;height:152px;background:#15151d"></div>


<!-- ===== timeline toolbar icons ===== -->
<svg style="left:18px;top:615px" width="18" height="16" viewBox="0 0 18 16" fill="none" stroke="#f0f0f4" stroke-width="1.400" stroke-linecap="round" stroke-linejoin="round"><path d="M5.500 1.200L1.200 5.200L5.500 9.200M1.500 5.200H12A4.600 4.600 0 0 1 12 14.400H8"/></svg>
<svg style="left:56px;top:615px" width="18" height="16" viewBox="0 0 18 16" fill="none" stroke="#55555a" stroke-width="1.400" stroke-linecap="round" stroke-linejoin="round"><path d="M12.500 1.200L16.800 5.200L12.500 9.200M16.500 5.200H6A4.600 4.600 0 0 0 6 14.400H10"/></svg>
<svg style="left:94px;top:615px" width="17" height="18" viewBox="0 0 17 18" fill="none" stroke="#55555a" stroke-width="1.400" stroke-linecap="round" stroke-linejoin="round"><path d="M1 4H16M5.500 4V2.500A1.500 1.500 0 0 1 7 1H10A1.500 1.500 0 0 1 11.500 2.500V4M2.800 4V14.500A2.500 2.500 0 0 0 5.300 17H11.700A2.500 2.500 0 0 0 14.200 14.500V4M7 8V13M10 8V13"/></svg>
<div class="a" style="left:130px;top:617px;width:1px;height:15px;background:#434348"></div>
<svg style="left:149px;top:616px" width="17" height="16" viewBox="0 0 17 16" fill="none" stroke="#55555a" stroke-width="1.400" stroke-linecap="round"><circle cx="3.800" cy="12" r="2.800"/><circle cx="13.200" cy="12" r="2.800"/><path d="M5.500 9.800L12.800 1M11.500 9.800L4.200 1"/></svg>
<div class="t" style="left:173px;top:617px;font-size:13px;color:#55555a">分割</div>
<div class="a" style="left:221px;top:617px;width:1px;height:15px;background:#434348"></div>
<svg style="left:242px;top:616px" width="14" height="16" viewBox="0 0 14 16" fill="none" stroke="#4e4e53" stroke-width="1.300" stroke-linecap="round" stroke-linejoin="round"><path d="M3 1H11A2 2 0 0 1 13 3V10.500L7 15L1 10.500V3A2 2 0 0 1 3 1ZM4.500 5H9.500M4.500 8H9.500"/></svg>
<svg style="left:279px;top:616px" width="17" height="16" viewBox="0 0 17 16" fill="none" stroke="#f0f0f4" stroke-width="1.500" stroke-linecap="round"><rect x=".8" y=".8" width="15.400" height="14.400" rx="4"/><path d="M5.500 5H11.500M8.500 5V11.500" stroke-width="2"/></svg>
<svg style="left:301px;top:622px" width="7" height="5" viewBox="0 0 7 5"><path d="M0 0H7L3.500 4.500Z" fill="#f0f0f4"/></svg>
<svg style="left:326px;top:616px" width="19" height="16" viewBox="0 0 19 16" fill="none" stroke="#f0f0f4" stroke-width="1.400" stroke-linecap="round"><path d="M.8 1H17.500M.8 7H5M.8 12.500H3.500"/><circle cx="9" cy="12.500" r="2.200"/><circle cx="15.500" cy="12.500" r="2.200"/><path d="M10.500 10.800L16 5M14 10.800L8.500 5"/></svg>
<div class="a" style="left:362px;top:617px;width:1px;height:15px;background:#434348"></div>
<svg style="left:381px;top:616px" width="20" height="18" viewBox="0 0 20 18" fill="none" stroke="#55555a" stroke-width="1.300" stroke-linecap="round" stroke-linejoin="round"><path d="M4 4.500V2.500A1.500 1.500 0 0 1 5.500 1H12.500A1.500 1.500 0 0 1 14 2.500V4.500"/><rect x="1" y="4.500" width="16" height="11" rx="2.500"/><path d="M9 13V7.500M6.500 9.800L9 7.300L11.500 9.800"/><circle cx="17.500" cy="16" r="1.200" fill="#55555a" stroke="none"/></svg>

<svg style="left:1083px;top:616px" width="14" height="16" viewBox="0 0 14 16" fill="none" stroke="#f0f0f4" stroke-width="1.400" stroke-linecap="round"><rect x="4.200" y=".8" width="5.600" height="9" rx="2.800"/><path d="M1.200 7.300A5.800 5.800 0 0 0 12.800 7.300M7 13.300V15.200"/></svg>
<div class="a" style="left:1121px;top:617px;width:1px;height:15px;background:#434348"></div>
<svg style="left:1144px;top:620px" width="18" height="8" viewBox="0 0 18 8" fill="none" stroke-linecap="round"><path d="M6.500 4H11.500" stroke="#9a9a9e" stroke-width="1.600"/><path d="M7 1.200H4A2.800 2.800 0 0 0 4 6.800H7M11 1.200H14A2.800 2.800 0 0 1 14 6.800H11" stroke="#f0f0f4" stroke-width="2.200"/></svg>
<svg style="left:1186px;top:616px" width="18" height="16" viewBox="0 0 18 16"><rect x=".8" y="5" width="7.400" height="6" rx="2" fill="#f0f0f4"/><rect x="9.800" y="5" width="7.400" height="6" rx="2" fill="#f0f0f4"/><path d="M9 1V3.500M9 12.500V15M6.200 1.500L7.400 3.500M11.800 1.500L10.600 3.500M6.200 14.500L7.400 12.500M11.800 14.500L10.600 12.500" stroke="#b8b8bc" stroke-width="1" stroke-linecap="round"/></svg>
<svg style="left:1227px;top:616px" width="20" height="16" viewBox="0 0 20 16" fill="none" stroke="#f0f0f4" stroke-width="1.400" stroke-linecap="round"><path d="M7.500 4.800H4.200A2.700 2.700 0 0 0 1.500 7.500V8.500A2.700 2.700 0 0 0 4.200 11.200H7.500M12.500 4.800H15.800A2.700 2.700 0 0 1 18.500 7.500V8.500A2.700 2.700 0 0 1 15.800 11.200H12.500M10 2.300V13.700"/></svg>
<svg style="left:1270px;top:617px" width="18" height="14" viewBox="0 0 18 14" fill="none" stroke="#f0f0f4" stroke-width="1.500" stroke-linecap="round" stroke-linejoin="round"><rect x=".8" y=".8" width="16.400" height="12.400" rx="4"/><path d="M4.200 7H13.800M6.300 4.900L4.200 7L6.300 9.100M11.700 4.900L13.800 7L11.700 9.100" stroke-width="1.800"/></svg>
<svg style="left:1313px;top:616px" width="16" height="16" viewBox="0 0 16 16" fill="none" stroke="#f0f0f4" stroke-width="1.300" stroke-linecap="round"><circle cx="8" cy="8" r="7.200"/><path d="M6 8H10" stroke-width="2"/></svg>
<div class="a" style="left:1337px;top:622px;width:100px;height:4px;border-radius:2px;background:#3e3e43"></div>
<div class="a" style="left:1337px;top:622px;width:54px;height:4px;border-radius:2px;background:#f4f4f6"></div>
<div class="a" style="left:1385px;top:618px;width:12px;height:12px;border-radius:50%;border:2.500px solid #f4f4f6;background:#1a1a20"></div>
<svg style="left:1445px;top:616px" width="16" height="16" viewBox="0 0 16 16" fill="none" stroke="#f0f0f4" stroke-width="1.300" stroke-linecap="round"><circle cx="8" cy="8" r="7.200"/><path d="M6 8H10M8 6V10" stroke-width="1.900"/></svg>

<!-- ===== timeline body ===== -->
<div class="a" style="left:107px;top:640px;width:1px;height:152px;background:#2b2b32"></div>
<div class="a" style="left:12px;top:683px;width:92px;height:61px;border-radius:4px;background:#24242b"></div>
<svg style="left:27px;top:708px" width="10" height="10" viewBox="0 0 10 10"><rect x=".5" y=".5" width="9" height="9" rx="2" fill="#8e8e94" stroke="#c8c8cc" stroke-width=".8"/><path d="M3.300 2.200V7.800M6.700 2.200V7.800M3.300 5H6.700" stroke="#2a2a31" stroke-width="1.300"/></svg>
<svg style="left:53px;top:709px" width="11" height="8" viewBox="0 0 11 8" fill="none" stroke="#c8c8cc" stroke-width=".9"><ellipse cx="5.500" cy="4" rx="4.800" ry="3.300"/><circle cx="5.500" cy="4" r="1.400"/></svg>
<svg style="left:78px;top:707px" width="12" height="12" viewBox="0 0 12 12" fill="none" stroke="#c8c8cc" stroke-width=".9" stroke-linejoin="round" stroke-linecap="round"><path d="M1 4H3L6.200 1.200V10.800L3 8H1Z"/><path d="M8 3.500A3.500 3.500 0 0 1 8 8.500M9.500 2A5.500 5.500 0 0 1 9.500 10"/></svg>
<svg style="left:154px;top:675px" width="1272" height="84" viewBox="0 0 1272 84" fill="none" stroke-width="1">
 <path d="M12 .5H1262M10 83.500H1262" stroke="#77777e" stroke-dasharray="6 5.750"/>
 <path d="M.5 10V74M1271.500 10V74" stroke="#5c5c64" stroke-dasharray="1.200 2"/>
 <path d="M.5 10A9.500 9.500 0 0 1 10 .5M1262 .5A9.500 9.500 0 0 1 1271.500 10M1271.500 74A9.500 9.500 0 0 1 1262 83.500M10 83.500A9.500 9.500 0 0 1 .5 74" stroke="#4e4e56" stroke-dasharray="2 2.500"/>
</svg>
<div class="a" style="left:690px;top:686px;width:200px;height:40px;border-radius:6px;background:linear-gradient(90deg,#7a3df2,#a33be8 55%,#c63ce0)"></div>
<div class="t" style="left:690px;top:699px;width:200px;text-align:center;font-size:13px;font-weight:bold;letter-spacing:.8px;color:#fff">ファイルをインポート</div>
<div class="t" style="left:568px;top:743px;font-size:12px;color:#d4d4d8">動画や画像をここにドラッグまたはインポートして、動画作成を始めてください。</div>
<div class="a" style="left:0;top:799px;width:1480px;height:1px;background:#47474b"></div>
<div class="a" style="left:0;top:794px;width:1px;height:6px;background:#47474b"></div>
<div class="a" style="left:1479px;top:792px;width:1px;height:8px;background:#47474b"></div>

</body></html>
